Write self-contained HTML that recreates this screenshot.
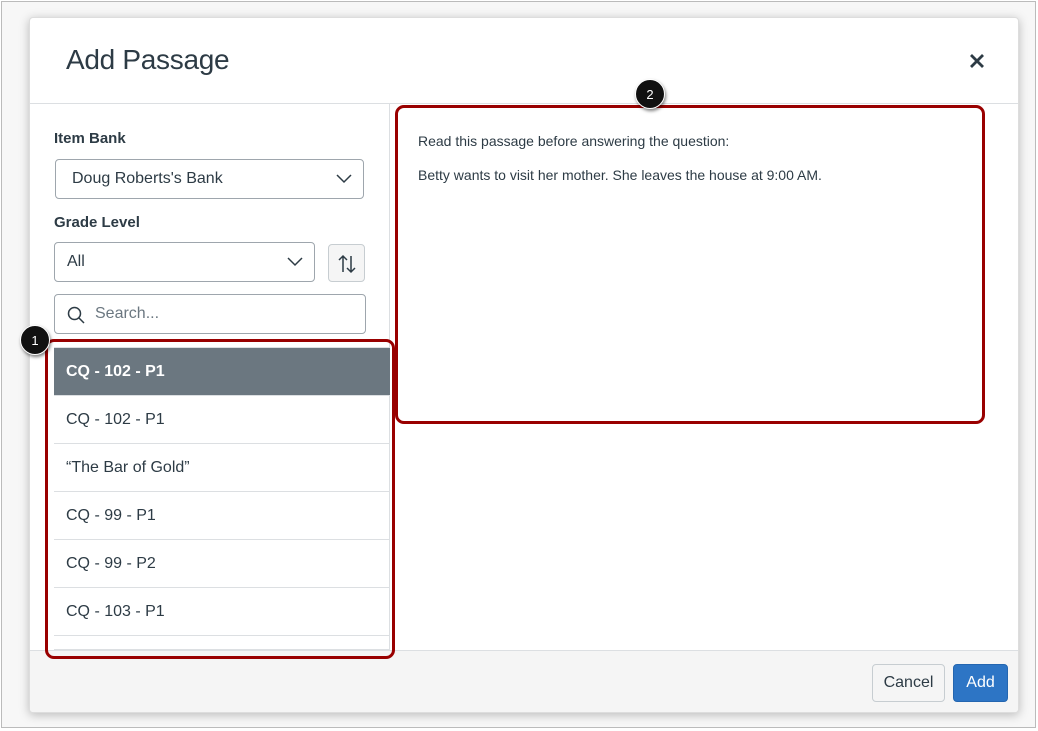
<!DOCTYPE html>
<html><head><style>
*{box-sizing:border-box;margin:0;padding:0}
body{width:1038px;height:731px;position:relative;background:#fff;font-family:"Liberation Sans",sans-serif;color:#2d3b45;overflow:hidden}
.frame{position:absolute;left:1px;top:1px;width:1035px;height:727px;border:1px solid #bbb;background:#f7f7f7}
.modal{position:absolute;left:29px;top:17px;width:990px;height:696px;background:#fff;border:1px solid #ddd;border-radius:4px;box-shadow:0 2px 10px rgba(0,0,0,.25);overflow:hidden}
.abs{position:absolute}
h1{position:absolute;left:36px;top:26px;font-size:28px;font-weight:normal;color:#2d3b45;letter-spacing:-0.3px}
.hdr{position:absolute;left:0;top:0;width:990px;height:86px;border-bottom:1px solid #dcdfe2}
.lp{position:absolute;left:0;top:86px;width:360px;height:546px;border-right:1px solid #dcdfe2}
.lbl{position:absolute;font-size:15px;font-weight:bold}
.box{position:absolute;border:1px solid #9ea6ad;border-radius:4px;background:#fff;font-size:16px;padding-left:16px;display:flex;align-items:center}
.row{position:absolute;left:24px;width:336px;height:48px;border-bottom:1px solid #dcdfe2;font-size:16px;padding-left:12px;display:flex;align-items:center}
.foot{position:absolute;left:0;top:632px;width:990px;height:64px;background:#f5f5f5;border-top:1px solid #dcdfe2}
.red{position:absolute;border:3px solid #990000;border-radius:9px}
.badge{position:absolute;width:30px;height:30px;border-radius:50%;background:#111;color:#fff;font-size:13px;display:flex;align-items:center;justify-content:center;box-shadow:1px 2px 3px rgba(0,0,0,.5);border:1px solid #fff}
</style></head><body>
<div class="frame"></div>
<div class="modal">
 <div class="hdr"><h1>Add Passage</h1>
  <svg class="abs" style="left:939px;top:35px" width="16" height="16" viewBox="0 0 16 16"><path d="M2 2L14 14M14 2L2 14" stroke="#2d3b45" stroke-width="2.8"/></svg>
 </div>
 <div class="lp">
  <div class="lbl" style="left:24px;top:26px">Item Bank</div>
  <div class="box" style="left:25px;top:55px;width:309px;height:40px">Doug Roberts's Bank
   <svg class="abs" style="left:280px;top:14px" width="16" height="10" viewBox="0 0 16 10"><path d="M1 1L8 8L15 1" stroke="#2d3b45" stroke-width="1.5" fill="none"/></svg></div>
  <div class="lbl" style="left:24px;top:110px">Grade Level</div>
  <div class="box" style="left:24px;top:138px;width:261px;height:40px;padding-left:12px">All
   <svg class="abs" style="left:232px;top:14px" width="16" height="10" viewBox="0 0 16 10"><path d="M1 1L8 8L15 1" stroke="#2d3b45" stroke-width="1.5" fill="none"/></svg></div>
  <div class="abs" style="left:298px;top:140px;width:37px;height:38px;background:#f5f5f5;border:1px solid #c7cdd1;border-radius:4px">
   <svg class="abs" style="left:8px;top:9px" width="20" height="20" viewBox="0 0 20 20"><path d="M6 18V2M2 6L6 2L10 6M14 2V18M10 14L14 18L18 14" stroke="#2d3b45" stroke-width="1.5" fill="none"/></svg></div>
  <div class="box" style="left:24px;top:190px;width:312px;height:40px;padding-left:40px;color:#6b7780">Search...
   <svg class="abs" style="left:12px;top:11px" width="18" height="18" viewBox="0 0 18 18"><circle cx="7.5" cy="7.5" r="6" stroke="#2d3b45" stroke-width="1.5" fill="none"/><path d="M12 12L17 17" stroke="#2d3b45" stroke-width="1.5"/></svg></div>
  <div class="abs" style="left:24px;top:243px;width:336px;height:303px;border-top:1px solid #dcdfe2"></div>
  <div class="row" style="top:244px;background:#6b7780;color:#fff;font-weight:bold">CQ - 102 - P1</div>
  <div class="row" style="top:292px">CQ - 102 - P1</div>
  <div class="row" style="top:340px">“The Bar of Gold”</div>
  <div class="row" style="top:388px">CQ - 99 - P1</div>
  <div class="row" style="top:436px">CQ - 99 - P2</div>
  <div class="row" style="top:484px">CQ - 103 - P1</div>
  <div class="row" style="top:532px;height:14px"></div>
 </div>
 <div class="abs" style="left:388px;top:115px;font-size:14px">Read this passage before answering the question:</div>
 <div class="abs" style="left:388px;top:149px;font-size:14px">Betty wants to visit her mother. She leaves the house at 9:00 AM.</div>
 <div class="foot">
  <div class="abs" style="left:842px;top:13px;width:73px;height:38px;background:#f5f5f5;border:1px solid #c7cdd1;border-radius:4px;font-size:16px;display:flex;align-items:center;justify-content:center">Cancel</div>
  <div class="abs" style="left:923px;top:13px;width:55px;height:38px;background:#2d75c5;border:1px solid #2466b0;border-radius:4px;color:#fff;font-size:16px;display:flex;align-items:center;justify-content:center">Add</div>
 </div>
</div>
<div class="red" style="left:45px;top:339px;width:350px;height:320px"></div>
<div class="red" style="left:395px;top:105px;width:590px;height:319px"></div>
<div class="badge" style="left:20px;top:325px">1</div>
<div class="badge" style="left:635px;top:79px">2</div>
</body></html>
